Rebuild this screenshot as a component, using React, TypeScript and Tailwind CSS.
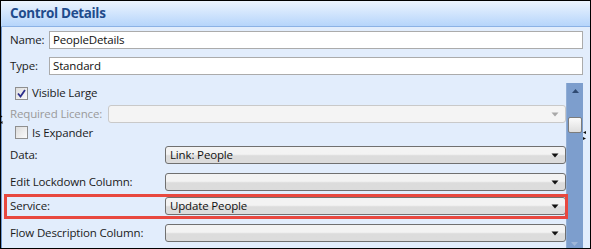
import React from "react";

function Arrow({ light = false }: { light?: boolean }) {
  return (
    <svg width="8" height="5" viewBox="0 0 8 5" className="shrink-0">
      <path d="M0.5 0.5 L7.5 0.5 L4 4.5 Z" fill={light ? "#a8a8a8" : "#111111"} />
    </svg>
  );
}

function Combo({ value = "", disabled = false }: { value?: string; disabled?: boolean }) {
  return (
    <div
      className={
        disabled
          ? "flex-1 h-[18px] rounded-[3px] border border-[#c9c9c9] bg-[#f4f4f4] flex items-center justify-between pl-[4px] pr-[6px]"
          : "flex-1 h-[18px] rounded-[3px] border border-[#707070] bg-gradient-to-b from-[#f3f3f3] from-45% to-[#dcdcdc] to-55% flex items-center justify-between pl-[4px] pr-[6px]"
      }
    >
      <span className="leading-none text-[#111] whitespace-nowrap">{value}</span>
      <Arrow light={disabled} />
    </div>
  );
}

function Check({ checked }: { checked: boolean }) {
  return (
    <div className="w-[13px] h-[13px] border border-[#8f8f8f] bg-gradient-to-br from-[#dcdcdc] to-[#fbfbfb] flex items-center justify-center shrink-0">
      {checked && (
        <svg width="9" height="9" viewBox="0 0 9 9">
          <path d="M1 4.5 L3.5 7.5 L8 1" stroke="#2c2e8c" strokeWidth="1.8" fill="none" />
        </svg>
      )}
    </div>
  );
}

function ComboRow({ label, value, mt }: { label: string; value?: string; mt: string }) {
  return (
    <div className={`flex items-center h-[18px] ${mt}`}>
      <span className="w-[155px] shrink-0 text-[#1b1b1b] leading-none whitespace-nowrap">{label}</span>
      <Combo value={value} />
    </div>
  );
}

export default function App() {
  return (
    <div className="w-[591px] h-[249px] bg-white font-['Open_Sans',sans-serif] text-[11.5px] tracking-[-0.15px]">
      <div className="w-full h-full border border-black flex flex-col bg-[#e2edfc] relative overflow-hidden">
        <div className="h-[26px] shrink-0 border-b border-[#8cb2e5] bg-gradient-to-b from-[#ecf4fe] to-[#b6d5fb] flex items-center pl-[9px]">
          <span className="text-[13.5px] font-bold text-[#1f4b8c] leading-none tracking-[-0.35px] whitespace-nowrap">Control Details</span>
        </div>
        <div className="flex-1 flex flex-col border-l border-[#6f98d2] pl-[8px] pr-[7px] min-h-0">
          <div className="flex items-center h-[18px] mt-[4px]">
            <span className="w-[39px] shrink-0 leading-none text-[#1b1b1b] whitespace-nowrap">Name:</span>
            <div className="flex-1 h-[18px] border border-[#ababab] bg-white flex items-center pl-[3px] leading-none text-[#111] whitespace-nowrap">PeopleDetails</div>
          </div>
          <div className="flex items-center h-[18px] mt-[8px]">
            <span className="w-[39px] shrink-0 leading-none text-[#1b1b1b] whitespace-nowrap">Type:</span>
            <div className="flex-1 h-[18px] border border-[#ababab] bg-white flex items-center pl-[3px] leading-none text-[#111] whitespace-nowrap">Standard</div>
          </div>
          <div className="flex flex-1 mt-[8px] min-h-0">
            <div className="flex-1 flex flex-col">
              <div className="flex items-center h-[20px] pl-[5px]">
                <Check checked />
                <span className="ml-[4px] leading-none text-[#1b1b1b] whitespace-nowrap">Visible Large</span>
              </div>
              <div className="flex items-center h-[18px] mt-[2px]">
                <span className="w-[98px] shrink-0 leading-none text-[#9a9a9a] whitespace-nowrap">Required Licence:</span>
                <Combo disabled />
              </div>
              <div className="flex items-center h-[19px] pl-[5px]">
                <Check checked={false} />
                <span className="ml-[4px] leading-none text-[#1b1b1b] whitespace-nowrap">Is Expander</span>
              </div>
              <ComboRow label="Data:" value="Link: People" mt="mt-[4px]" />
              <ComboRow label="Edit Lockdown Column:" mt="mt-[9px]" />
              <ComboRow label="Service:" value="Update People" mt="mt-[6px]" />
              <ComboRow label="Flow Description Column:" mt="mt-[9px]" />
            </div>
            <div className="w-[17px] shrink-0 bg-[#7d9ecd] border-l border-[#91aed6] flex flex-col items-center relative">
              <svg width="7" height="4" viewBox="0 0 7 4" className="mt-[6px]">
                <path d="M0 4 L7 4 L3.5 0 Z" fill="#2f4a72" />
              </svg>
              <div className="mt-[24px] w-[14px] h-[16px] rounded-[2px] border border-[#7c7c7c] bg-gradient-to-b from-[#fbfbfb] to-[#dedede]" />
              <svg width="7" height="4" viewBox="0 0 7 4" className="absolute bottom-[2px] left-[4px]">
                <path d="M0 0 L7 0 L3.5 4 Z" fill="#9fb6d8" />
              </svg>
            </div>
          </div>
        </div>
        <div className="absolute left-[3px] top-[193px] w-[564px] h-[25px] border-[3px] border-[#e8483f] pointer-events-none" />
        <svg width="4" height="10" viewBox="0 0 4 10" className="absolute left-[582px] top-[130px]">
          <path d="M3 0 L0 1.5 L3 3 Z" fill="#111" />
          <path d="M0 6 L3 7.5 L0 9 Z" fill="#111" />
        </svg>
        <svg width="3" height="10" viewBox="0 0 3 10" className="absolute left-[-1px] top-[114px]">
          <path d="M0 0 L2.5 1.5 L0 3 Z" fill="#111" />
          <path d="M2.5 6 L0 7.5 L2.5 9 Z" fill="#111" />
        </svg>
      </div>
    </div>
  );
}
